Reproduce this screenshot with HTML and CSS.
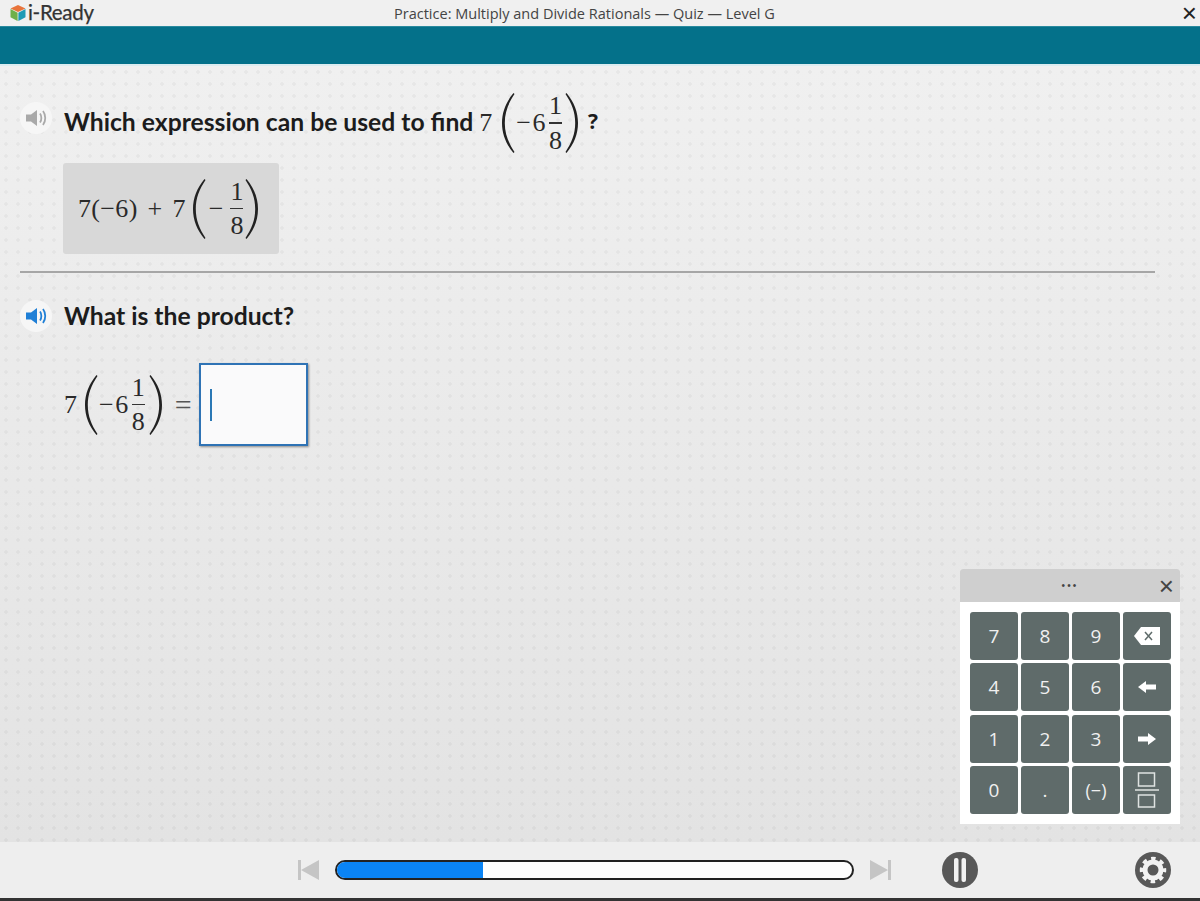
FILE: index.html
```html
<!DOCTYPE html>
<html lang="en">
<head>
<meta charset="utf-8">
<title>i-Ready</title>
<link rel="stylesheet" href="styles.css">
</head>
<body>
<div class="app">
  <header class="topbar">
    <div class="brand">
      <svg class="cube" viewBox="0 0 16 17" width="16" height="18" aria-hidden="true">
        <path d="M8 .5 15.5 4 8 7.6.5 4Z" fill="#e8743b"/>
        <path d="M.5 4.6 7.6 8.2V16.5L.5 12.8Z" fill="#6fb04a"/>
        <path d="M15.5 4.6 8.4 8.2V16.5L15.5 12.8Z" fill="#1e9bb5"/>
      </svg>
      <span class="brand-name">i-Ready</span>
    </div>
    <div class="title">Practice: Multiply and Divide Rationals — Quiz — Level G</div>
    <div class="close">×</div>
  </header>
  <div class="band"></div>
  <main class="stage">
    <section class="row q1">
      <span class="speaker">
        <svg viewBox="0 0 24 20" width="24" height="20" aria-hidden="true"><path d="M2 6.5H7L13 2V18L7 13.5H2Z" fill="#a9a9a9"/><path d="M16 5.5C17.8 8 17.8 12 16 14.500M19 3C22 7 22 13 19 17" fill="none" stroke="#a9a9a9" stroke-width="1.800"/></svg>
      </span>
      <span class="prompt">Which expression can be used to find</span>
      <span class="math m-q1">
        <span>7</span>
        <svg class="paren pl" viewBox="0 0 14 62" aria-hidden="true"><path d="M12.500 1C5 10 1 20 1 31S5 52 12.500 61L13.500 60C7.500 51 3.800 42 3.800 31S7.500 11 13.500 2Z"/></svg>
        <span class="neg">−6</span>
        <span class="frac"><span>1</span><span class="bar"></span><span>8</span></span>
        <svg class="paren pr" viewBox="0 0 14 62" aria-hidden="true"><path d="M1.500 1C9 10 13 20 13 31S9 52 1.500 61L.5 60C6.500 51 10.200 42 10.200 31S6.500 11 .5 2Z"/></svg>
      </span>
      <span class="prompt qmark">?</span>
    </section>
    <div class="chip">
      <span class="math">
        <span class="sum">7(−6) + 7</span>
        <svg class="paren pl-chip" viewBox="0 0 14 62" aria-hidden="true"><path d="M12.500 1C5 10 1 20 1 31S5 52 12.500 61L13.500 60C7.500 51 3.800 42 3.800 31S7.500 11 13.500 2Z"/></svg>
        <span>−</span>
        <span class="frac frac-chip"><span>1</span><span class="bar"></span><span>8</span></span>
        <svg class="paren" viewBox="0 0 14 62" aria-hidden="true"><path d="M1.500 1C9 10 13 20 13 31S9 52 1.500 61L.5 60C6.500 51 10.200 42 10.200 31S6.500 11 .5 2Z"/></svg>
      </span>
    </div>
    <hr class="divider">
    <section class="row q2">
      <span class="speaker">
        <svg viewBox="0 0 24 20" width="24" height="20" aria-hidden="true"><path d="M2 6.500H7L13 2V18L7 13.500H2Z" fill="#1f7fd6"/><path d="M16 5.500C17.800 8 17.800 12 16 14.500M19 3C22 7 22 13 19 17" fill="none" stroke="#1f7fd6" stroke-width="1.800"/></svg>
      </span>
      <span class="prompt">What is the product?</span>
    </section>
    <section class="equation">
      <span class="math">
        <span>7</span>
        <svg class="paren pl-eq" viewBox="0 0 14 62" aria-hidden="true"><path d="M12.500 1C5 10 1 20 1 31S5 52 12.500 61L13.500 60C7.500 51 3.800 42 3.800 31S7.500 11 13.500 2Z"/></svg>
        <span class="neg">−6</span>
        <span class="frac frac-eq"><span>1</span><span class="bar"></span><span>8</span></span>
        <svg class="paren" viewBox="0 0 14 62" aria-hidden="true"><path d="M1.500 1C9 10 13 20 13 31S9 52 1.500 61L.5 60C6.500 51 10.200 42 10.200 31S6.500 11 .5 2Z"/></svg>
        <span class="equals">=</span>
      </span>
      <div class="answer"><span class="caret"></span></div>
    </section>
    <aside class="keypad">
      <div class="pad-head"><span class="dots">•••</span><span class="pad-close">×</span></div>
      <div class="keys">
        <div class="key">7</div><div class="key">8</div><div class="key">9</div>
        <div class="key"><svg viewBox="0 0 26 18" width="26" height="18" aria-hidden="true"><path d="M7 0H26V18H7L0 9Z" fill="#fff"/><path d="M11 5 18 13M18 5 11 13" stroke="#5f6b6a" stroke-width="1.500"/></svg></div>
        <div class="key">4</div><div class="key">5</div><div class="key">6</div>
        <div class="key"><svg viewBox="0 0 18 12" width="18" height="12" aria-hidden="true"><path d="M0 6 8 0V3.500H18V8.500H8V12Z" fill="#fff"/></svg></div>
        <div class="key">1</div><div class="key">2</div><div class="key">3</div>
        <div class="key"><svg viewBox="0 0 18 12" width="18" height="12" aria-hidden="true"><path d="M18 6 10 0V3.500H0V8.500H10V12Z" fill="#fff"/></svg></div>
        <div class="key">0</div><div class="key">.</div><div class="key small">(−)</div>
        <div class="key"><svg viewBox="0 0 26 42" width="26" height="42" aria-hidden="true"><g fill="none" stroke="#dfe3e2" stroke-width="1.500"><rect x="4.500" y="4" width="16" height="13"/><rect x="4.500" y="26" width="16" height="12"/></g><path d="M1 21H25" stroke="#dfe3e2" stroke-width="1.500"/></svg></div>
      </div>
    </aside>
  </main>
  <footer class="footer">
    <svg class="skip" viewBox="0 0 21 22" width="21" height="22" aria-hidden="true"><path d="M0 1H3V21H0ZM21 1V21L3 11Z" fill="#c5c5c5"/></svg>
    <div class="progress"><div class="progress-fill"></div></div>
    <svg class="skip" viewBox="0 0 21 22" width="21" height="22" aria-hidden="true"><path d="M21 1H18V21H21ZM0 1V21L18 11Z" fill="#c5c5c5"/></svg>
    <svg class="pause" viewBox="0 0 36 36" width="36" height="36" aria-hidden="true"><circle cx="18" cy="18" r="18" fill="#585858"/><rect x="12" y="6" width="4.500" height="24" rx="2" fill="#f2f2f2"/><rect x="19.500" y="6" width="4.500" height="24" rx="2" fill="#f2f2f2"/></svg>
    <svg class="gear" viewBox="0 0 36 36" width="36" height="36" aria-hidden="true"><circle cx="18" cy="18" r="18" fill="#585858"/><circle cx="18" cy="18" r="8" fill="none" stroke="#f2f2f2" stroke-width="5"/><circle cx="18" cy="18" r="11.500" fill="none" stroke="#f2f2f2" stroke-width="3.500" stroke-dasharray="4.500 4.532" stroke-dashoffset="2.250"/></svg>
  </footer>
  <div class="edge"></div>
</div>
</body>
</html>
```

FILE: styles.css
```css
* { box-sizing: border-box; }
html, body { margin: 0; height: 100%; overflow: hidden; }
body { font-family: "Lato", "Liberation Sans", sans-serif; color: #222; background: #eee; }
.app { width: 1200px; height: 901px; display: flex; flex-direction: column; }

.topbar { height: 26px; background: #f0f0f0; display: flex; align-items: center; padding-left: 10px; position: relative; }
.brand { display: flex; align-items: center; gap: 2px; width: 384px; }
.cube { flex: none; margin-bottom: 1px; }
.brand-name { font-size: 20.500px; line-height: 24px; color: #333; letter-spacing: -.3px; margin-bottom: 2px; -webkit-text-stroke: .25px #333; }
.title { font-family: "Open Sans", sans-serif; font-size: 14.530px; color: #444; white-space: nowrap; margin-bottom: 1px; }
.close { position: absolute; right: 3px; top: -2px; font-family: "Liberation Sans", sans-serif; font-size: 26px; line-height: 30px; color: #222; }

.band { height: 40px; background: #04718a; border-bottom: 2px solid #dcecf0; box-shadow: inset 0 1px 0 #2a8a9e; }

.stage {
  flex: 1;
  position: relative;
  padding: 26px 0 0 20px;
  background-color: #ececec;
  background-image:
    radial-gradient(circle, rgba(0,0,0,.04) 1.500px, transparent 2px),
    linear-gradient(#f0f0f0, #e3e3e3);
  background-size: 12px 12px, 100% 100%;
}

.row { display: flex; align-items: center; }
.q1 { height: 62px; }
.speaker { width: 32px; height: 32px; border-radius: 50%; background: #f6f6f6; display: flex; align-items: center; justify-content: center; margin-right: 12px; flex: none; }
.q1 .speaker { margin-top: -10px; }
.prompt { font-size: 24.700px; font-weight: 700; color: #1c1c1c; white-space: nowrap; margin-bottom: 2px; }
.q1 .prompt { margin-bottom: 4px; }
.q1 .qmark { font-family: "Open Sans", sans-serif; font-size: 21px; margin-left: 9px; }

.math { display: inline-flex; align-items: center; font-family: "Liberation Serif", serif; font-size: 26px; color: #2a2a2a; white-space: nowrap; }
.m-q1 { margin-left: 6px; }
.paren { width: 14px; height: 62px; flex: none; fill: #222; }
.neg { letter-spacing: 1.500px; }
.sum { word-spacing: 3px; letter-spacing: .35px; }
.pl { margin-left: 9px; margin-right: 1px; }
.pr { margin-left: 1px; }
.frac { display: flex; flex-direction: column; align-items: center; margin-left: 2px; margin-right: 2px; width: 13px; }
.frac > span:first-child, .frac > span:last-child { height: 33px; line-height: 33px; flex: none; }
.bar { width: 13px; height: 1.500px; background: #333; flex: none; }

.chip { width: 216px; height: 91px; margin: 9px 0 0 43px; padding-left: 15px; background: #d8d8d8; border-radius: 3px; display: flex; align-items: center; }
.pl-chip { margin-left: 6px; margin-right: 3px; }
.frac-chip { margin-left: 7px; }

.divider { width: 1135px; height: 2px; margin: 17px 0 0; border: 0; background: #a6a6a6; }

.q2 { height: 32px; margin-top: 27px; }

.equation { display: flex; align-items: center; margin: 31px 0 0 44px; height: 83px; }
.pl-eq { margin-left: 7px; margin-right: 1px; }
.frac-eq { margin-right: 4px; }
.equals { margin-left: 12px; font-size: 30px; color: #555; }
.answer { width: 109px; height: 83px; margin-left: 7px; padding-left: 9px; display: flex; align-items: center; background: #fafafb; border: 2px solid #2f73b5; box-shadow: 1px 1px 2px rgba(0,0,0,.4); }
.caret { width: 2px; height: 32px; background: #2a78b5; }

.keypad { position: absolute; left: 960px; top: 503px; width: 220px; background: #fff; border-radius: 3px 3px 0 0; }
.pad-head { height: 33px; background: #cfcfcf; border-radius: 3px 3px 0 0; display: flex; align-items: center; justify-content: center; position: relative; }
.dots { font-family: "Liberation Sans", sans-serif; font-size: 10px; letter-spacing: 2.200px; color: #444; }
.pad-close { position: absolute; right: 6px; top: 1px; font-family: "Liberation Sans", sans-serif; font-size: 26px; line-height: 32px; color: #444; }
.keys { display: grid; grid-template-columns: repeat(4, 48px); grid-auto-rows: 48px; gap: 3.330px 3px; padding: 10px; }
.key { background: #5f6b6a; border-radius: 3px; display: flex; align-items: center; justify-content: center; font-family: "Open Sans", sans-serif; font-size: 19px; color: #f0f0f0; }
.key.small { font-size: 18px; }

.footer { height: 56px; background: #eee; display: flex; align-items: center; padding-left: 298px; padding-right: 29px; }
.skip { flex: none; }
.progress { width: 519px; height: 20px; margin: 0 16px 0 16px; background: #fff; border: 2px solid #222; border-radius: 10px; overflow: hidden; }
.progress-fill { width: 146px; height: 100%; background: #0a84f5; }
.pause { margin-left: 51px; flex: none; }
.gear { margin-left: auto; flex: none; }
.edge { height: 3px; background: #333; }
```
